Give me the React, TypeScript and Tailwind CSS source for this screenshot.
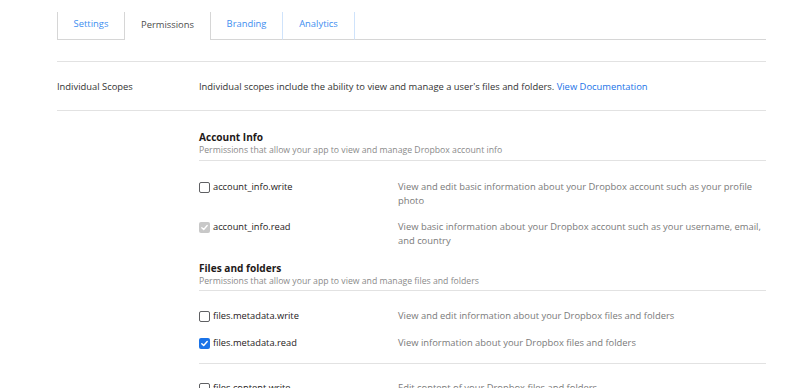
import React from "react";

const font = { fontFamily: '"Open Sans", "Liberation Sans", sans-serif' };

function Box({ state }: { state: "off" | "on" | "disabled" }) {
  if (state === "off")
    return <span className="inline-block w-[11px] h-[11px] border border-[#5f6063] rounded-[2px] bg-white" />;
  if (state === "on")
    return (
      <span className="inline-flex items-center justify-center w-[11px] h-[11px] rounded-[2px] bg-[#1a73e8]">
        <svg width="9" height="9" viewBox="0 0 10 10"><path d="M2 5.2 L4.1 7.2 L8 2.8" fill="none" stroke="white" strokeWidth="1.6" strokeLinecap="round" strokeLinejoin="round" /></svg>
      </span>
    );
  return (
    <span className="inline-flex items-center justify-center w-[11px] h-[11px] rounded-[2px] bg-[#c8c8c8]">
      <svg width="9" height="9" viewBox="0 0 10 10"><path d="M2 5.2 L4.1 7.2 L8 2.8" fill="none" stroke="white" strokeWidth="1.5" strokeLinecap="round" strokeLinejoin="round" /></svg>
    </span>
  );
}

function Row({ state, name, desc, h }: { state: "off" | "on" | "disabled"; name: string; desc: string; h: string }) {
  return (
    <div className={`flex ${h}`}>
      <div className="w-[199px] flex items-start gap-[3px]">
        <span className="mt-[1.5px] flex"><Box state={state} /></span>
        <span className="text-[9.3px] leading-[14px] text-[#1e1919]">{name}</span>
      </div>
      <div className="flex-1 text-[9.4px] leading-[14px] text-[#7a7a7a]">{desc}</div>
    </div>
  );
}

export default function App() {
  return (
    <div className="w-[800px] h-[388px] overflow-hidden bg-white" style={font}>
      <div className="ml-[57px] w-[709px]">
        <div className="pt-[12px] flex border-b border-[#d6d6d6] h-[40px]">
          <div className="w-[68px] border-l border-r border-b border-[#d6d6d6] -mb-px flex items-center justify-center pb-[2px] text-[9.4px] text-[#3e8ef0]">Settings</div>
          <div className="w-[86px] border-r border-[#d6d6d6] bg-white -mb-px flex items-center justify-center pb-[2px] text-[9.4px] text-[#4d4d4d]">Permissions</div>
          <div className="w-[72px] border-r border-b border-[#cfe3fb] border-b-[#d6d6d6] -mb-px flex items-center justify-center pb-[2px] text-[9.4px] text-[#3e8ef0]">Branding</div>
          <div className="w-[72px] border-r border-b border-[#cfe3fb] border-b-[#d6d6d6] -mb-px flex items-center justify-center pb-[2px] text-[9.4px] text-[#3e8ef0]">Analytics</div>
        </div>
        <div className="mt-[21px] border-t border-[#e2e2e2] h-[50px] flex items-center border-b pt-[3px]">
          <div className="w-[142px] text-[9.4px] text-[#333333]">Individual Scopes</div>
          <div className="text-[9.4px] text-[#333333]">
            Individual scopes include the ability to view and manage a user's files and folders.{" "}
            <span className="text-[#1a73e8]">View Documentation</span>
          </div>
        </div>
        <div className="ml-[142px]">
          <div className="pt-[19px]">
            <div className="text-[10.1px] font-bold leading-[14px] text-[#1e1919]">Account Info</div>
            <div className="text-[8.7px] leading-[13px] text-[#8a8a8a]">Permissions that allow your app to view and manage Dropbox account info</div>
          </div>
          <div className="mt-[3px] border-t border-[#e2e2e2] pt-[19px]">
            <Row state="off" name="account_info.write" desc="View and edit basic information about your Dropbox account such as your profile photo" h="h-[40px]" />
            <Row state="disabled" name="account_info.read" desc="View basic information about your Dropbox account such as your username, email, and country" h="h-[40px]" />
          </div>
          <div className="pt-[1px]">
            <div className="text-[10.1px] font-bold leading-[14px] text-[#1e1919]">Files and folders</div>
            <div className="text-[8.7px] leading-[13px] text-[#8a8a8a]">Permissions that allow your app to view and manage files and folders</div>
          </div>
          <div className="mt-[2px] border-t border-[#e2e2e2] pt-[18px]">
            <Row state="off" name="files.metadata.write" desc="View and edit information about your Dropbox files and folders" h="h-[27px]" />
            <Row state="on" name="files.metadata.read" desc="View information about your Dropbox files and folders" h="h-[27px]" />
          </div>
          <div className="border-t border-[#e2e2e2] pt-[17px]">
            <Row state="off" name="files.content.write" desc="Edit content of your Dropbox files and folders" h="h-[27px]" />
          </div>
        </div>
      </div>
    </div>
  );
}
